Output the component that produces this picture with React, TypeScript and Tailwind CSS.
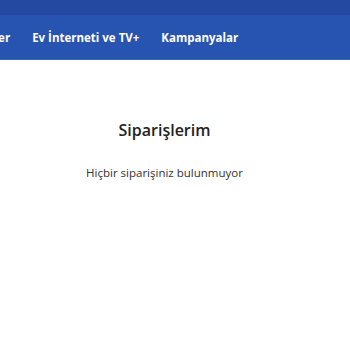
import React from 'react';

export default function App() {
  const navItems = ['Tarifeler', 'Ev İnterneti ve TV+', 'Kampanyalar'];

  return (
    <div className="w-[350px] h-[350px] bg-white overflow-hidden font-['Open_Sans','Noto_Sans',sans-serif]">
      {/* Top strip */}
      <div className="h-[15px] bg-[#2449a0]" />

      {/* Main nav */}
      <nav className="h-[45px] bg-[#2754b0] border-b border-[#3a66bb] flex items-center overflow-hidden">
        <div className="flex items-center gap-[22px] -ml-[39px] whitespace-nowrap pt-[2px]">
          {navItems.map((item) => (
            <span key={item} className="text-white text-[11.5px] font-bold">
              {item}
            </span>
          ))}
        </div>
      </nav>

      {/* Orders */}
      <main className="flex flex-col items-center pt-[62px] pr-[21px]">
        <h1 className="text-[16px] font-semibold text-[#222] leading-none">Siparişlerim</h1>
        <p className="mt-[29px] text-[11.5px] text-[#333] leading-none">Hiçbir siparişiniz bulunmuyor</p>
      </main>
    </div>
  );
}
